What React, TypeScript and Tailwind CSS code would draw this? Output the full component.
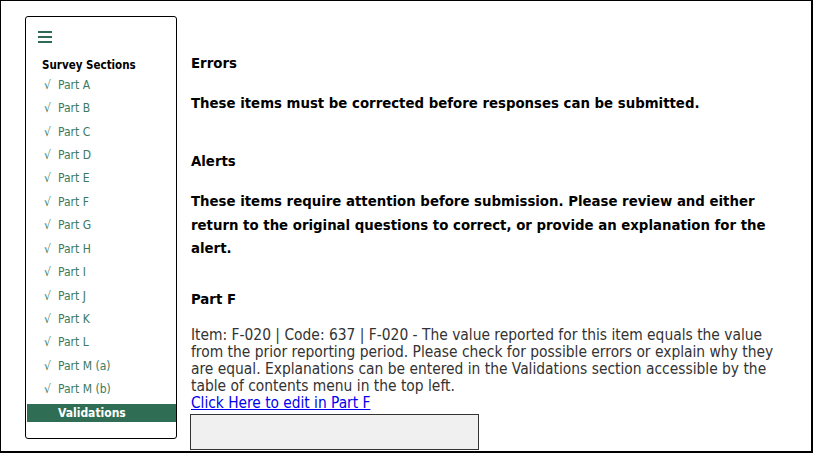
import React from "react";

const parts = [
  "Part A","Part B","Part C","Part D","Part E","Part F","Part G","Part H","Part I","Part J","Part K","Part L","Part M (a)","Part M (b)",
];

export default function App() {
  const font = { fontFamily: '"DejaVu Sans Condensed", "DejaVu Sans", sans-serif' } as React.CSSProperties;
  return (
    <div className="w-[814px] h-[454px] bg-white" style={font}>
      <div className="w-[813px] h-[453px] border-l border-t border-r-2 border-b-2 border-black flex items-start">
        <aside className="ml-[24px] mt-[15px] w-[152px] h-[423px] border border-black rounded-[3px] flex flex-col">
          <div className="ml-[12px] mt-[14px] flex flex-col gap-[3px] w-[14px]">
            <div className="h-[2px] bg-[#2e6b55]" />
            <div className="h-[2px] bg-[#2e6b55]" />
            <div className="h-[2px] bg-[#2e6b55]" />
          </div>
          <div className="ml-[16px] mt-[15px] text-[11.5px] leading-[14px] font-bold text-black">Survey Sections</div>
          <div className="mt-[1px] flex flex-col">
            {parts.map((p) => (
              <div key={p} className="h-[23.43px] flex items-center text-[12px] text-[#3b7a60]">
                <span className="ml-[18px] w-[14px] text-[12px] leading-none">√</span>
                <span>{p}</span>
              </div>
            ))}
            <div className="h-[23.43px] flex items-center">
              <div className="ml-px w-full h-[18px] bg-[#2f6e55] text-white font-bold text-[12px] flex items-center pl-[31px]">Validations</div>
            </div>
          </div>
        </aside>
        <main className="ml-[14px] flex-1 flex flex-col text-black">
          <div className="mt-[50px] text-[14.8px] leading-[24px] font-bold">Errors</div>
          <div className="mt-[16px] text-[14.8px] leading-[24px] font-bold">These items must be corrected before responses can be submitted.</div>
          <div className="mt-[34px] text-[14.8px] leading-[24px] font-bold">Alerts</div>
          <div className="mt-[16px] text-[14.8px] leading-[23.5px] font-bold">
            These items require attention before submission. Please review and either
            <br />
            return to the original questions to correct, or provide an explanation for the
            <br />
            alert.
          </div>
          <div className="mt-[27.5px] text-[14.8px] leading-[24px] font-bold">Part F</div>
          <div className="mt-[15.5px] text-[15.4px] leading-[17px] text-[#333]">
            Item: F-020 | Code: 637 | F-020 - The value reported for this item equals the value
            <br />
            from the prior reporting period. Please check for possible errors or explain why they
            <br />
            are equal. Explanations can be entered in the Validations section accessible by the
            <br />
            table of contents menu in the top left.
          </div>
          <a href="#" className="text-[15.3px] leading-[17px] text-[#0000ee] underline self-start">Click Here to edit in Part F</a>
          <div className="mt-[2.5px] -ml-px w-[289px] h-[36px] border border-[#333] bg-[#f0f0f0]" />
        </main>
      </div>
    </div>
  );
}
